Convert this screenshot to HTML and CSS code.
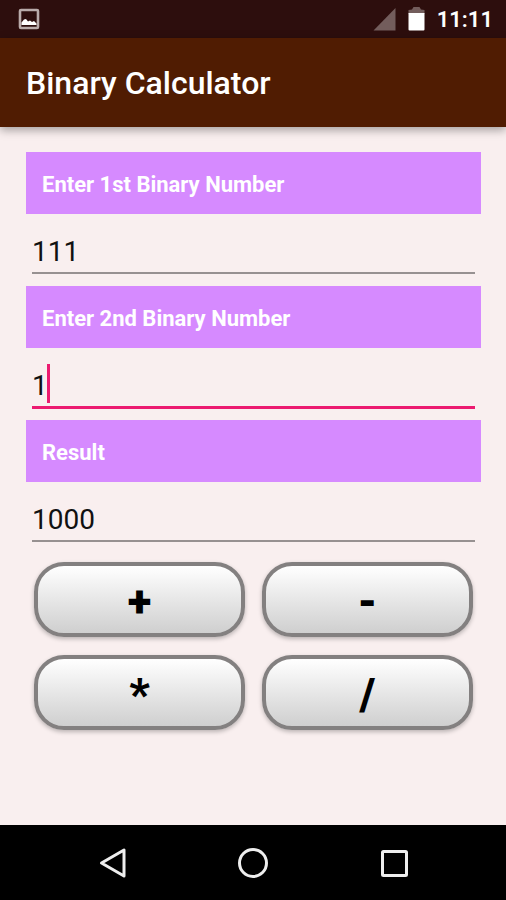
FILE: index.html
```
<!DOCTYPE html>
<html lang="en">
<head>
<meta charset="utf-8">
<meta name="viewport" content="width=device-width, initial-scale=1">
<title>Binary Calculator</title>
<link rel="stylesheet" href="styles.css">
</head>
<body>
<div class="status-bar">
  <svg class="status-photo" width="22" height="22" viewBox="0 0 22 22" aria-hidden="true">
    <rect x="2" y="2" width="18" height="18" rx="1" fill="none" stroke="#b9abaa" stroke-width="2.6"/>
    <path d="M3.500 17V14.500L6 11.500L8 11L10 13.500L12 12.500L14 14L16 13L18.500 15.500V17Z" fill="#fff"/>
  </svg>
  <svg width="23" height="24" viewBox="0 0 23 24" aria-hidden="true">
    <path d="M22.500 1V23.500H0.500Z" fill="#735d5c"/>
  </svg>
  <svg width="17" height="24" viewBox="0 0 17 24" aria-hidden="true">
    <path d="M0.500 7V3L4 2.500L5.500 0H11.500L13 2.500L16.500 3V7Z" fill="#735d5c"/>
    <path d="M0.500 6H16.500V22.500Q16.500 23.500 15.500 23.500H1.500Q0.500 23.500 0.500 22.500Z" fill="#fff"/>
  </svg>
  <time class="clock">11:11</time>
</div>
<header class="app-bar">
  <h1>Binary Calculator</h1>
</header>
<main class="calculator">
  <div class="field">
    <label for="first">Enter 1st Binary Number</label>
    <input id="first" type="text" inputmode="numeric" value="111">
  </div>
  <div class="field field-active">
    <label for="second">Enter 2nd Binary Number</label>
    <input id="second" type="text" inputmode="numeric" value="1">
    <span class="caret"></span>
  </div>
  <div class="field">
    <label for="result">Result</label>
    <input id="result" type="text" value="1000" readonly>
  </div>
  <div class="operators">
    <button type="button">+</button>
    <button type="button">-</button>
    <button type="button">*</button>
    <button type="button">/</button>
  </div>
</main>
<nav class="nav-bar">
  <button type="button" aria-label="Back">
    <svg width="32" height="32" viewBox="0 0 32 32"><path d="M28 3V29L5.500 16Z"/></svg>
  </button>
  <button type="button" aria-label="Home">
    <svg width="32" height="32" viewBox="0 0 32 32"><circle cx="16" cy="16" r="13.500"/></svg>
  </button>
  <button type="button" aria-label="Recent apps">
    <svg width="32" height="32" viewBox="0 0 32 32"><rect x="4.500" y="4.500" width="24" height="24" rx="1"/></svg>
  </button>
</nav>
</body>
</html>
```
FILE: styles.css
```
* {
  box-sizing: border-box;
}

body {
  margin: 0;
  min-height: 100vh;
  display: flex;
  flex-direction: column;
  background: #f9efef;
  color: #111;
  font-family: Roboto, "Liberation Sans", sans-serif;
}

.status-bar {
  display: flex;
  align-items: center;
  gap: 12px;
  height: 38px;
  padding: 0 13px 0 18px;
  background: #2d0e0d;
  color: #fff;
}

.status-photo {
  margin-right: auto;
}

.clock {
  font-size: 22px;
  font-weight: 600;
  line-height: 38px;
  padding-top: 2px;
}

.app-bar {
  display: flex;
  align-items: center;
  height: 89px;
  padding: 0 26px;
  background: #501c02;
  color: #fff;
  box-shadow: 0 3px 9px rgba(0, 0, 0, 0.35);
}

.app-bar h1 {
  margin: 0;
  font-size: 32px;
  font-weight: 500;
  line-height: 40px;
}

.calculator {
  flex: 1;
  padding: 25px 25px 26px 26px;
}

.field {
  position: relative;
  display: flex;
  flex-direction: column;
  height: 134px;
}

.field label {
  height: 62px;
  padding: 2px 16px 0;
  background: #d68aff;
  color: #fff;
  font-size: 22px;
  font-weight: 700;
  line-height: 62px;
}

.field input {
  height: 60px;
  margin: 0 6px;
  padding: 16px 0 0;
  border: 0;
  border-bottom: 2px solid #979191;
  border-radius: 0;
  background: transparent;
  color: #111;
  font: 400 28px/40px Roboto, "Liberation Sans", sans-serif;
  outline: none;
}

.field-active input {
  height: 61px;
  border-bottom: 3px solid #ec1a70;
}

.caret {
  position: absolute;
  left: 21px;
  top: 78px;
  width: 3px;
  height: 39px;
  background: #ec1a70;
}

.operators {
  display: grid;
  grid-template-columns: 1fr 1fr;
  gap: 18px 17px;
  margin: 8px 8px 0;
}

.operators button {
  height: 75px;
  padding: 4px 0 0;
  border: 4px solid #838080;
  border-radius: 30px;
  background: linear-gradient(#fff, #cfcfcf);
  box-shadow: 0 2px 4px rgba(0, 0, 0, 0.25);
  color: #000;
  font: 900 44px/60px Roboto, "Liberation Sans", sans-serif;
}

.nav-bar {
  display: flex;
  justify-content: center;
  gap: 109px;
  height: 75px;
  background: #000;
}

.nav-bar button {
  display: flex;
  align-items: center;
  padding: 0;
  border: 0;
  background: none;
}

.nav-bar svg {
  fill: none;
  stroke: #eee;
  stroke-width: 3;
  stroke-linejoin: round;
}
```
